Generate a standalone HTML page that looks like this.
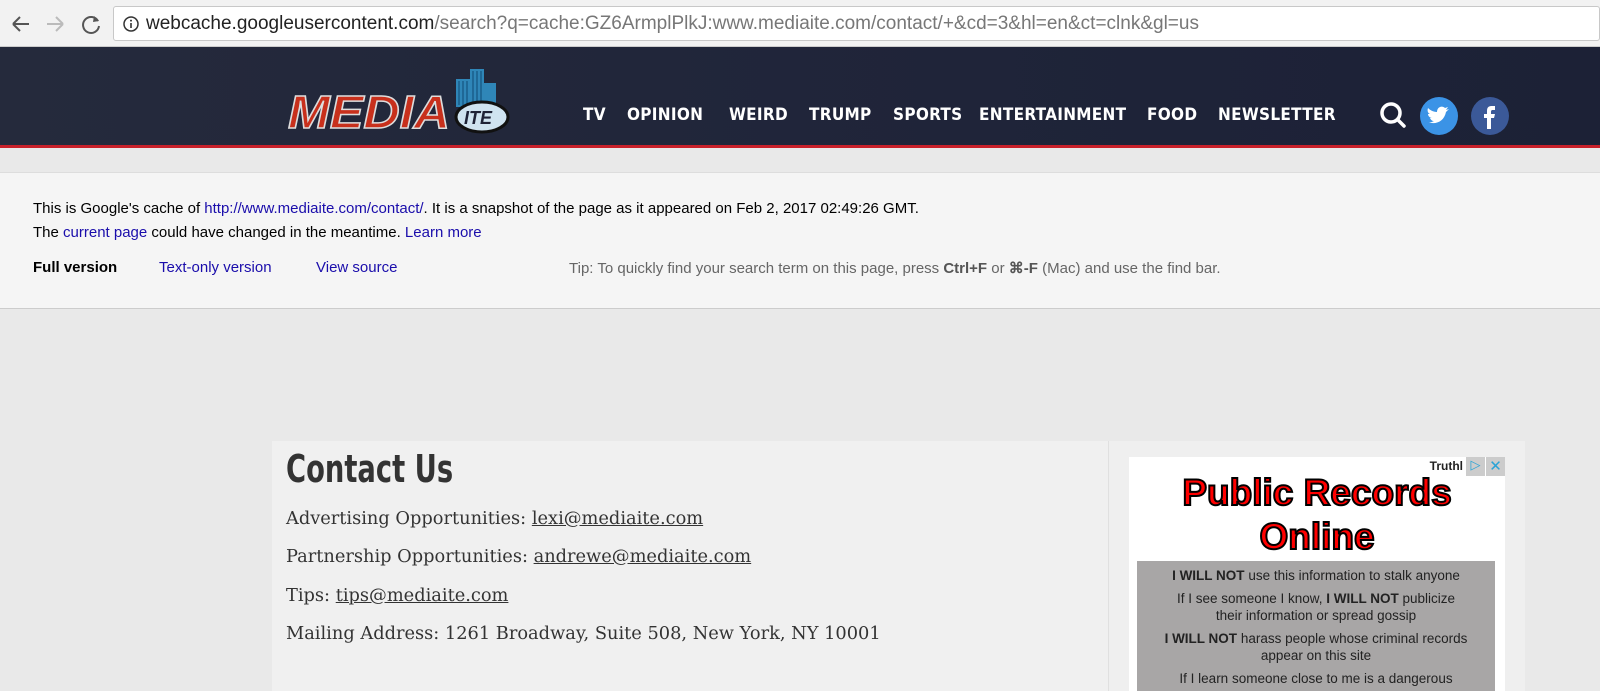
<!DOCTYPE html><html><head><style>
*{margin:0;padding:0;box-sizing:border-box}
body{width:1600px;height:691px;overflow:hidden;background:#e9e9e9;font-family:"Liberation Sans",sans-serif;position:relative}
.bar{position:absolute;left:0;top:0;width:1600px;height:47px;background:#f2f2f2;border-bottom:1px solid #ccc}
.url{position:absolute;left:113px;top:6px;width:1487px;height:35px;background:#fff;border:1px solid #c8c8c8;border-radius:3px;font-size:19px;line-height:33px;padding-left:32px;color:#777}
.url b{font-weight:normal;color:#222}
.hdr{position:absolute;left:0;top:47px;width:1600px;height:101px;background:linear-gradient(90deg,#252a3c,#1f2439 60%,#1c2136);border-bottom:3px solid #c8202a}
.nav{position:absolute;top:105px;color:#fff;font-weight:bold;font-size:17px;letter-spacing:.3px;font-family:"DejaVu Sans Condensed","Liberation Sans",sans-serif}
.cache{position:absolute;left:0;top:172px;width:1600px;height:137px;background:#f5f5f5;border-top:1px solid #ddd;border-bottom:1px solid #ccc;font-size:15px;color:#000}
.cache a{color:#1a0dab;text-decoration:none}
.main{position:absolute;left:272px;top:441px;width:836px;height:250px;background:#f0f0f0}
.side{position:absolute;left:1108px;top:441px;width:417px;height:250px;background:#efefef;border-left:1px solid #e0e0e0}
.main h1{position:absolute;left:14px;top:6px;font-family:"DejaVu Sans Condensed","Liberation Sans",sans-serif;font-size:38px;color:#333;font-weight:bold;transform:scaleX(.8);transform-origin:0 0}
.main p{position:absolute;left:14px;font-family:"DejaVu Serif","Liberation Serif",serif;font-size:17.8px;color:#333}
.ad{position:absolute;left:1129px;top:457px;width:376px;height:234px;background:#fff}
.pr{position:absolute;width:376px;text-align:center;font-weight:bold;font-size:37px;color:#f00;-webkit-text-stroke:2px #000;line-height:44px}
.gbox{position:absolute;left:1137px;top:561px;width:358px;height:130px;background:#a8a6a6;text-align:center;font-size:13.5px;color:#222;line-height:17px;padding-top:6px}
.gbox div{margin-bottom:6px}
</style></head><body>
<div class="bar">
<svg style="position:absolute;left:10px;top:13px" width="90" height="22"><path d="M3 11h16M3 11l7-7M3 11l7 7" stroke="#555" stroke-width="2" fill="none"/><path d="M37 11h16M53 11l-7-7M53 11l-7 7" stroke="#bbb" stroke-width="2" fill="none"/><path d="M88 8a8 8 0 1 0 1 5" stroke="#555" stroke-width="2" fill="none"/><path d="M84 3l5 5-6 1z" fill="#555"/></svg>
<div class="url"><svg style="position:absolute;left:9px;top:9px" width="16" height="16"><circle cx="8" cy="8" r="7" stroke="#333" stroke-width="1.5" fill="none"/><rect x="7.2" y="7" width="1.6" height="5" fill="#333"/><circle cx="8" cy="4.6" r="1" fill="#333"/></svg><b>webcache.googleusercontent.com</b>/search?q=cache:GZ6ArmplPlkJ:www.mediaite.com/contact/+&amp;cd=3&amp;hl=en&amp;ct=clnk&amp;gl=us</div>
</div>
<div class="hdr">
<svg style="position:absolute;left:286px;top:20px" width="230" height="70"><g fill="#2f86b8"><rect x="170" y="12" width="14" height="28"/><rect x="184" y="2" width="14" height="36"/><rect x="198" y="16" width="12" height="24"/></g><g stroke="#1a5f8a" stroke-width="1.5"><path d="M187 4v32M191 4v32M195 4v32M173 14v24M177 14v24M181 14v24"/></g><ellipse cx="196" cy="50" rx="26" ry="15" fill="#cfe3f0" stroke="#111" stroke-width="3"/><text x="178" y="57" font-family="Liberation Sans" font-weight="bold" font-style="italic" font-size="18" fill="#1e2236">ITE</text><text x="2" y="61" font-family="Liberation Sans" font-weight="bold" font-style="italic" font-size="46" fill="#c8301c" stroke="#ddd" stroke-width="1.5" textLength="162" lengthAdjust="spacingAndGlyphs">MEDIA</text></svg>
</div>
<div class="nav" style="left:583px">TV</div><div class="nav" style="left:627px">OPINION</div><div class="nav" style="left:729px">WEIRD</div><div class="nav" style="left:809px">TRUMP</div><div class="nav" style="left:893px">SPORTS</div><div class="nav" style="left:979px">ENTERTAINMENT</div><div class="nav" style="left:1147px">FOOD</div><div class="nav" style="left:1218px">NEWSLETTER</div>
<svg style="position:absolute;left:1376px;top:97px" width="140" height="40"><circle cx="15" cy="16" r="9" stroke="#fff" stroke-width="3.5" fill="none"/><path d="M22 23l6 6" stroke="#fff" stroke-width="3.5" stroke-linecap="round"/><circle cx="63" cy="19" r="19" fill="#3b93e6"/><path d="M52 25c7 3 16 0 18-10l3-3-3 1 2-3-3 1c-3-3-8-1-8 4-4 0-7-2-9-4-1 3 0 5 2 6h-2c0 2 2 4 4 4h-2c1 2 2 3 4 3-2 1-4 2-6 1z" fill="#fff"/><circle cx="114" cy="19" r="19" fill="#3b5998"/><path d="M111 32v-11h-3v-4h3v-3c0-4 2-5 5-5h3v4h-2c-1 0-2 0-2 2v2h4l-1 4h-3v11z" fill="#fff"/></svg>
<div class="cache">
<div style="position:absolute;left:33px;top:27px">This is Google's cache of <a>http://www.mediaite.com/contact/</a>. It is a snapshot of the page as it appeared on Feb 2, 2017 02:49:26 GMT.</div>
<div style="position:absolute;left:33px;top:51px">The <a>current page</a> could have changed in the meantime. <a>Learn more</a></div>
<div style="position:absolute;left:33px;top:86px;font-weight:bold">Full version</div>
<div style="position:absolute;left:159px;top:86px"><a>Text-only version</a></div>
<div style="position:absolute;left:316px;top:86px"><a>View source</a></div>
<div style="position:absolute;left:569px;top:86px;color:#666">Tip: To quickly find your search term on this page, press <b style="color:#555">Ctrl+F</b> or <b style="color:#555">⌘-F</b> (Mac) and use the find bar.</div>
</div>
<div class="main">
<h1>Contact Us</h1>
<p style="top:67px">Advertising Opportunities: <u>lexi@mediaite.com</u></p>
<p style="top:105px">Partnership Opportunities: <u>andrewe@mediaite.com</u></p>
<p style="top:144px">Tips: <u>tips@mediaite.com</u></p>
<p style="top:182px">Mailing Address: 1261 Broadway, Suite 508, New York, NY 10001</p>
</div>
<div class="side"></div>
<div class="ad">
<div style="position:absolute;right:42px;top:2px;font-size:12px;font-weight:bold;color:#222">Truthl</div>
<div style="position:absolute;right:20px;top:0;width:19px;height:19px;background:#ccc;color:#29a3d6;font-size:13px;text-align:center">▷</div>
<div style="position:absolute;right:0;top:0;width:19px;height:19px;background:#ccc;color:#29a3d6;font-size:15px;text-align:center;line-height:19px">✕</div>
<div class="pr" style="top:14px">Public Records</div>
<div class="pr" style="top:58px">Online</div>
</div>
<div class="gbox">
<div><b>I WILL NOT</b> use this information to stalk anyone</div>
<div>If I see someone I know, <b>I WILL NOT</b> publicize<br>their information or spread gossip</div>
<div><b>I WILL NOT</b> harass people whose criminal records<br>appear on this site</div>
<div>If I learn someone close to me is a dangerous</div>
</div>
</body></html>
